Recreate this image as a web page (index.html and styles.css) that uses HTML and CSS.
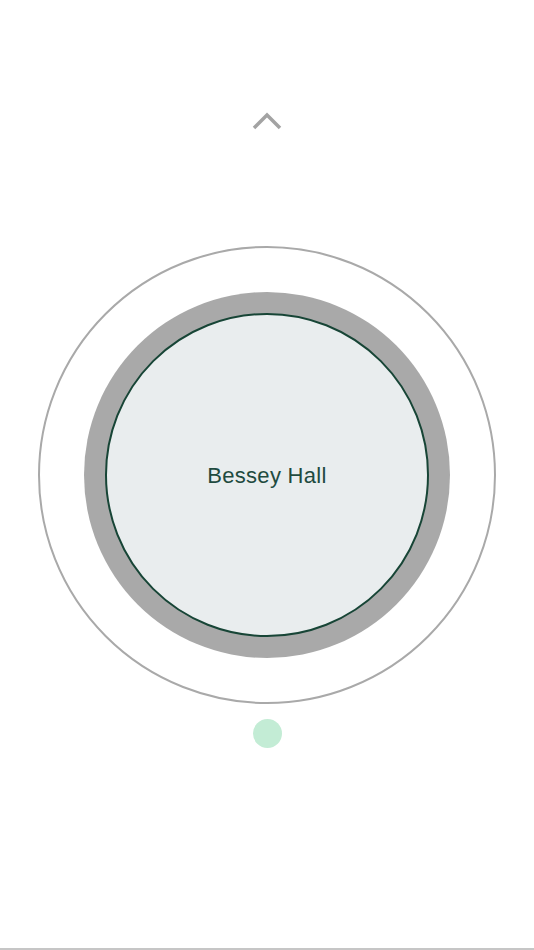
FILE: index.html
```html
<!DOCTYPE html>
<html>
<head>
<meta charset="utf-8">
<link rel="stylesheet" href="styles.css">
</head>
<body>
<div class="page">
  <svg class="chevron" width="30" height="18" viewBox="0 0 30 18">
    <polyline points="2,16 15,3 28,16" fill="none" stroke="#a3a3a3" stroke-width="3.5"/>
  </svg>
  <div class="dial">
    <div class="ring">
      <div class="core">
        <span class="label">Bessey Hall</span>
      </div>
    </div>
  </div>
  <div class="dot"></div>
  <div class="footer"></div>
</div>
</body>
</html>
```
FILE: styles.css
```css
html, body {
  margin: 0;
  padding: 0;
  background: #ffffff;
}
.page {
  width: 534px;
  height: 950px;
  display: flex;
  flex-direction: column;
  align-items: center;
  box-sizing: border-box;
}
.chevron {
  display: block;
  margin-top: 112px;
}
.dial {
  margin-top: 116px;
  width: 458px;
  height: 458px;
  border: 2px solid #a9a9a9;
  border-radius: 50%;
  box-sizing: border-box;
  display: flex;
  align-items: center;
  justify-content: center;
}
.ring {
  width: 366px;
  height: 366px;
  border-radius: 50%;
  background: #a9a9a9;
  display: flex;
  align-items: center;
  justify-content: center;
}
.core {
  width: 324px;
  height: 324px;
  border-radius: 50%;
  border: 2.5px solid #174536;
  background: #e9edee;
  box-sizing: border-box;
  display: flex;
  align-items: center;
  justify-content: center;
}
.label {
  font-family: "Liberation Sans", Arial, sans-serif;
  font-size: 22px;
  letter-spacing: 0.3px;
  color: #1f4b3f;
  margin-top: 2px;
}
.dot {
  margin-top: 15px;
  width: 29px;
  height: 29px;
  border-radius: 50%;
  background: #c3ecd5;
}
.footer {
  margin-top: auto;
  width: 100%;
  height: 2px;
  background: #c6c6c6;
}
```
